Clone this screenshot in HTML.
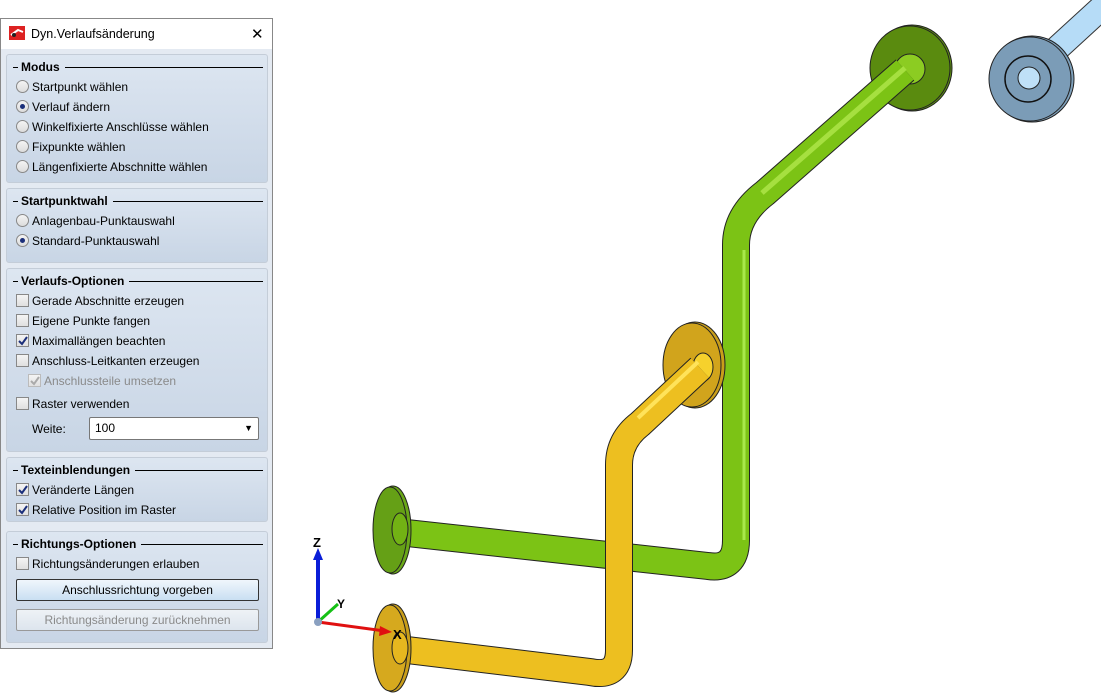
<!DOCTYPE html>
<html><head><meta charset="utf-8"><style>
*{box-sizing:border-box;margin:0;padding:0}
body{width:1101px;height:693px;background:#fff;position:relative;overflow:hidden;font-family:"Liberation Sans",sans-serif;font-size:12px;color:#000}
#win{position:absolute;left:0;top:18px;width:273px;height:631px;border:1px solid #888;background:#e4eaf2}
#title{position:absolute;left:0;top:0;width:271px;height:30px;background:#fff}
#title span{position:absolute;left:30px;top:8px;font-size:12.5px}
#title .x{position:absolute;left:250px;top:6px;font-size:15px}
.sec{position:absolute;left:5px;width:262px;border:1px solid #c4cdd8;border-radius:3px;background:linear-gradient(#dde6f1,#c8d5e5)}
.hd{position:absolute;left:6px;top:5px;font-weight:bold;font-size:12px;display:flex;align-items:center;width:250px}
.hd:before{content:"";width:5px;border-top:1px solid #000;margin-right:3px}
.hd:after{content:"";flex:1;border-top:1px solid #000;margin-left:5px}
.it{position:absolute;left:9px;height:16px;line-height:16px;font-size:12px;white-space:nowrap}
.r{display:inline-block;width:13px;height:13px;border:1px solid #888;border-radius:50%;background:linear-gradient(#f4f4f4,#dcdcdc);vertical-align:-2px;margin-right:3px;position:relative}
.r.on:after{content:"";position:absolute;left:3px;top:3px;width:5px;height:5px;border-radius:50%;background:#1b2f7a}
.c{display:inline-block;width:13px;height:13px;border:1px solid #888;background:linear-gradient(#f4f4f4,#e0e0e0);vertical-align:-2px;margin-right:3px;position:relative;overflow:hidden}
.c svg{position:absolute;left:1px;top:1px}
.dis{color:#8a8a8a}
.dis .c{border-color:#bbb}
.btn{position:absolute;left:9px;width:243px;height:22px;border:1px solid #333;border-radius:2px;background:linear-gradient(#f0f6fc,#c9dff2);text-align:center;line-height:20px}
</style></head><body>
<div id="win">
 <div id="title"><svg style="position:absolute;left:8px;top:7px" width="16" height="14"><rect width="16" height="14" fill="#d22"/><path d="M2 9 L9 4 L14 6" stroke="#fff" stroke-width="2" fill="none"/><circle cx="5" cy="9" r="2" fill="#222"/></svg><span>Dyn.Verlaufsänderung</span><span class="x">✕</span></div>
 <div class="sec" style="top:35px;height:129px">
  <div class="hd">Modus</div>
  <div class="it" style="top:24px"><span class="r"></span>Startpunkt wählen</div>
  <div class="it" style="top:44px"><span class="r on"></span>Verlauf ändern</div>
  <div class="it" style="top:64px"><span class="r"></span>Winkelfixierte Anschlüsse wählen</div>
  <div class="it" style="top:84px"><span class="r"></span>Fixpunkte wählen</div>
  <div class="it" style="top:104px"><span class="r"></span>Längenfixierte Abschnitte wählen</div>
 </div>
 <div class="sec" style="top:169px;height:75px">
  <div class="hd">Startpunktwahl</div>
  <div class="it" style="top:24px"><span class="r"></span>Anlagenbau-Punktauswahl</div>
  <div class="it" style="top:44px"><span class="r on"></span>Standard-Punktauswahl</div>
 </div>
 <div class="sec" style="top:249px;height:184px">
  <div class="hd">Verlaufs-Optionen</div>
  <div class="it" style="top:24px"><span class="c"></span>Gerade Abschnitte erzeugen</div>
  <div class="it" style="top:44px"><span class="c"></span>Eigene Punkte fangen</div>
  <div class="it" style="top:64px"><span class="c"><svg width="10" height="10"><path d="M1 5 L4 8 L9 1" stroke="#1b2f7a" stroke-width="2" fill="none"/></svg></span>Maximallängen beachten</div>
  <div class="it" style="top:84px"><span class="c"></span>Anschluss-Leitkanten erzeugen</div>
  <div class="it dis" style="top:104px;left:21px"><span class="c"><svg width="10" height="10"><path d="M1 5 L4 8 L9 1" stroke="#aaa" stroke-width="2" fill="none"/></svg></span>Anschlussteile umsetzen</div>
  <div class="it" style="top:127px"><span class="c"></span>Raster verwenden</div>
  <div class="it" style="top:152px;left:25px">Weite:</div>
  <div style="position:absolute;left:82px;top:148px;width:170px;height:23px;border:1px solid #777;border-radius:2px;background:#fff;padding-left:5px;line-height:21px">100<span style="position:absolute;right:5px;top:0;font-size:9px">▼</span></div>
 </div>
 <div class="sec" style="top:438px;height:65px">
  <div class="hd">Texteinblendungen</div>
  <div class="it" style="top:24px"><span class="c"><svg width="10" height="10"><path d="M1 5 L4 8 L9 1" stroke="#1b2f7a" stroke-width="2" fill="none"/></svg></span>Veränderte Längen</div>
  <div class="it" style="top:44px"><span class="c"><svg width="10" height="10"><path d="M1 5 L4 8 L9 1" stroke="#1b2f7a" stroke-width="2" fill="none"/></svg></span>Relative Position im Raster</div>
 </div>
 <div class="sec" style="top:512px;height:112px">
  <div class="hd">Richtungs-Optionen</div>
  <div class="it" style="top:24px"><span class="c"></span>Richtungsänderungen erlauben</div>
  <div class="btn" style="top:47px">Anschlussrichtung vorgeben</div>
  <div class="btn dis" style="top:77px;border-color:#999;background:linear-gradient(#eef2f6,#dde5ee)">Richtungsänderung zurücknehmen</div>
 </div>
</div>
<svg style="position:absolute;left:0;top:0" width="1101" height="693">
 <g fill="none" stroke-linecap="butt" stroke-linejoin="round">
  <path d="M1050 55 L1110 0" stroke="#333" stroke-width="26"/>
  <path d="M1050 55 L1110 0" stroke="#b6dcf7" stroke-width="24"/>
  <ellipse cx="1032" cy="79" rx="42" ry="43" fill="#7ea0bb" stroke="#222"/>
  <ellipse cx="1030" cy="79" rx="41" ry="42" fill="#7b9cb7" stroke="#222"/>
  <ellipse cx="1028" cy="79" rx="23" ry="23" stroke="#111" stroke-width="1.5"/>
  <ellipse cx="1029" cy="78" rx="11" ry="11" fill="#bfe0f7" stroke="#222"/>
  <ellipse cx="912" cy="68" rx="40" ry="43" fill="#5d8f10" stroke="#222"/>
  <ellipse cx="910" cy="68" rx="40" ry="42" fill="#5a8b0f" stroke="#222"/>
  <ellipse cx="910" cy="69" rx="15" ry="15" fill="#8ccc22" stroke="#222"/>
  <path d="M905 70 L765 193 Q736 215 736 245 L736 540 Q736 570 708 566 L407 533" stroke="#222" stroke-width="28"/>
  <path d="M905 70 L765 193 Q736 215 736 245 L736 540 Q736 570 708 566 L407 533" stroke="#7cc315" stroke-width="26"/>
  <path d="M905 68 L762 193" stroke="#a6e040" stroke-width="5"/>
  <path d="M744 250 L744 540" stroke="#a8e84a" stroke-width="3"/>
  <ellipse cx="393" cy="530" rx="18" ry="44" fill="#6aa818" stroke="#222"/>
  <ellipse cx="390" cy="530" rx="17" ry="43" fill="#65a016" stroke="#222"/>
  <ellipse cx="400" cy="529" rx="8" ry="16" fill="#72b214" stroke="#222"/>
  <ellipse cx="695" cy="365" rx="30" ry="43" fill="#c99e1a" stroke="#222"/>
  <ellipse cx="692" cy="365" rx="29" ry="42" fill="#d1a41c" stroke="#222"/>
  <ellipse cx="703" cy="367" rx="10" ry="14" fill="#f6d12c" stroke="#222"/>
  <path d="M700 368 L640 424 Q619 440 619 465 L619 650 Q619 678 590 672 L407 650" stroke="#222" stroke-width="28"/>
  <path d="M700 368 L640 424 Q619 440 619 465 L619 650 Q619 678 590 672 L407 650" stroke="#edbf20" stroke-width="26"/>
  <path d="M698 362 L638 418" stroke="#ffe35a" stroke-width="4"/>
  <ellipse cx="393" cy="648" rx="18" ry="44" fill="#c99e1a" stroke="#222"/>
  <ellipse cx="390" cy="648" rx="17" ry="43" fill="#d6a91e" stroke="#222"/>
  <ellipse cx="400" cy="648" rx="8" ry="16" fill="#e6b71f" stroke="#222"/>
 </g>
 <line x1="318" y1="622" x2="318" y2="556" stroke="#0a1ed8" stroke-width="4"/>
 <path d="M313 560 L318 548 L323 560Z" fill="#0a1ed8"/>
 <text x="313" y="547" font-family="Liberation Sans" font-weight="bold" font-size="13">Z</text>
 <line x1="318" y1="622" x2="338" y2="604" stroke="#15c015" stroke-width="3"/>
 <text x="337" y="608" font-family="Liberation Sans" font-weight="bold" font-size="12">Y</text>
 <line x1="318" y1="622" x2="385" y2="631" stroke="#e01010" stroke-width="3"/>
 <path d="M380 626 L392 632 L379 636Z" fill="#e01010"/>
 <text x="393" y="639" font-family="Liberation Sans" font-weight="bold" font-size="13">X</text>
 <circle cx="318" cy="622" r="4" fill="#8aa0c0"/>
</svg>
</body></html>
